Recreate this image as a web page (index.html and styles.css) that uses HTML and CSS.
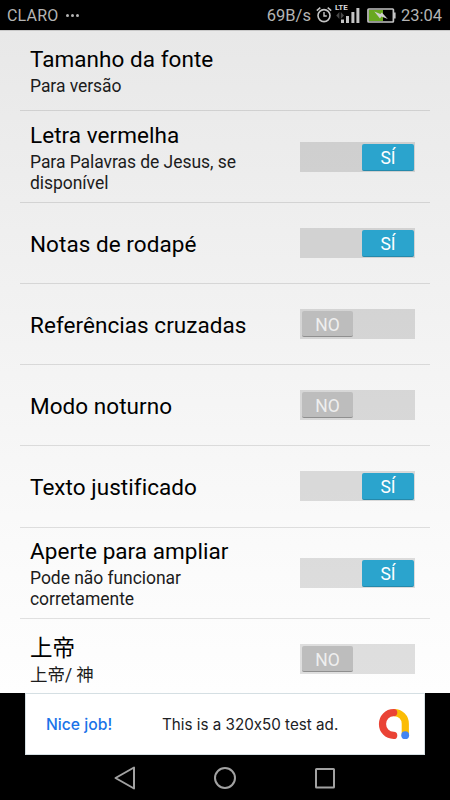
FILE: index.html
```html
<!DOCTYPE html>
<html lang="pt">
<head>
    <meta charset="UTF-8">
    <meta name="viewport" content="width=device-width, initial-scale=1.0">
    <title>Configurações</title>

    <link rel="stylesheet" href="styles.css">
</head>

<body>
    <div class="statusbar">
        <span class="carrier">CLARO</span>
        <span class="dots"><i></i><i></i><i></i></span>
        <span class="speed">69B/s</span>
        <svg class="alarm" width="16" height="18" viewBox="0 0 16 18" fill="none" stroke="#c4c4c4">
            <circle cx="8" cy="9.6" r="6" stroke-width="1.6"/>
            <path d="M8 6v4h2.8" stroke-width="1.4"/>
            <path d="M.8 4.6 4.3 1.6M15.2 4.6 11.7 1.6" stroke-width="1.5"/>
        </svg>
        <span class="signal">
            <b>LTE</b>
            <svg width="26" height="20" viewBox="0 0 26 20">
                <path d="M5.4 7v7L2.2 10.5zM6.8 7v7l3.2-3.5z" fill="#484848"/>
                <path d="M7 14.5h3V18H7zM12 11h3v7h-3zM17.4 7h3v11h-3zM22.4 3h3v15h-3z" fill="#c4c4c4"/>
            </svg>
        </span>
        <svg class="battery" width="29" height="15" viewBox="0 0 29 15">
            <rect x="2" y="2" width="14" height="11" fill="#69a820"/>
            <rect x="1" y="1" width="25.4" height="13" rx=".8" fill="none" stroke="#c4c4c4" stroke-width="1.7"/>
            <path d="M27 4.5h1.6v6H27z" fill="#c4c4c4"/>
            <path d="M7.3 3.4 13.4 6l1.4-1.6 6 6.7-6.4-2.7-1.4 2z" fill="#d0d0d0"/>
        </svg>
        <span class="clock">23:04</span>
    </div>

    <div class="settings">
        <div class="row">
            <div class="label">
                <h3>Tamanho da fonte</h3>
                <p>Para versão</p>
            </div>
        </div>
        <div class="row">
            <div class="label">
                <h3>Letra vermelha</h3>
                <p>Para Palavras de Jesus, se disponível</p>
            </div>
            <div class="switch on"><span>SÍ</span></div>
        </div>
        <div class="row">
            <div class="label"><h3>Notas de rodapé</h3></div>
            <div class="switch on"><span>SÍ</span></div>
        </div>
        <div class="row">
            <div class="label"><h3>Referências cruzadas</h3></div>
            <div class="switch"><span>NO</span></div>
        </div>
        <div class="row">
            <div class="label"><h3>Modo noturno</h3></div>
            <div class="switch"><span>NO</span></div>
        </div>
        <div class="row">
            <div class="label"><h3>Texto justificado</h3></div>
            <div class="switch on"><span>SÍ</span></div>
        </div>
        <div class="row">
            <div class="label">
                <h3>Aperte para ampliar</h3>
                <p>Pode não funcionar corretamente</p>
            </div>
            <div class="switch on"><span>SÍ</span></div>
        </div>
        <div class="row">
            <div class="label">
                <h3>上帝</h3>
                <p>上帝/ 神</p>
            </div>
            <div class="switch"><span>NO</span></div>
        </div>
    </div>

    <div class="ad">
        <span class="nice">Nice job!</span>
        <span class="adtext">This is a 320x50 test ad.</span>
        <svg width="32" height="32" viewBox="0 0 32 32" fill="none" stroke-width="7.2">
            <path d="M16 4.6c6.5 0 11.3 4.8 11.3 11.2V27" stroke="#fbbc04"/>
            <path d="M15.7 4.6C9.2 4.6 4.5 9.6 4.5 16s4.7 11.4 11.2 11.4" stroke="#ea4335" stroke-linecap="round"/>
            <circle cx="27.2" cy="27.2" r="3.9" fill="#4285f4"/>
        </svg>
    </div>

    <div class="navbar">
        <svg width="22" height="24" viewBox="0 0 22 24"><path d="M20 1.5v21L1.5 12z"/></svg>
        <svg width="22" height="24" viewBox="0 0 22 24"><circle cx="11" cy="12" r="10"/></svg>
        <svg width="22" height="24" viewBox="0 0 22 24"><rect x="2" y="3" width="18" height="18.5" rx=".5"/></svg>
    </div>
</body>

</html>
```
FILE: styles.css
```css
* {
    box-sizing: border-box;
}

body {
    margin: 0;
    width: 450px;
    height: 800px;
    overflow: hidden;
    background-color: #000;
    font-family: Roboto, "Noto Sans CJK SC", sans-serif;
    display: flex;
    flex-direction: column;
}

h3,
p {
    margin: 0;
    font-weight: normal;
}

/* status bar */
.statusbar {
    height: 30px;
    flex: none;
    display: flex;
    align-items: center;
    padding: 0 8px 0 7px;
    color: #b4b4b4;
    font-size: 16.5px;
}

.carrier {
    font-size: 16px;
    letter-spacing: .2px;
}

.dots {
    display: flex;
    gap: 2px;
    margin-left: 8px;
}

.dots i {
    width: 3px;
    height: 3px;
    border-radius: 50%;
    background-color: #b4b4b4;
}

.speed {
    margin-left: auto;
}

.alarm {
    margin-left: 5px;
}

.signal {
    position: relative;
    height: 20px;
    margin-left: 2px;
}

.signal svg {
    display: block;
}

.signal b {
    position: absolute;
    left: 1px;
    top: -2px;
    font-size: 8px;
    line-height: 10px;
    color: #d8d8d8;
}

.battery {
    margin-left: 7px;
}

.clock {
    margin-left: 5px;
}

/* settings list */
.settings {
    height: 663px;
    flex: none;
    overflow: hidden;
    padding: 0 20px;
    background: linear-gradient(#e8e8e8, #fbfbfb 82%, #fefefe);
    border-top: 1px solid #c8c8c8;
}

.row {
    height: 81.2px;
    display: flex;
    align-items: center;
    justify-content: space-between;
    padding: 0 15px 0 10px;
    border-bottom: 1px solid rgba(0, 0, 0, .11);
}

.row:first-child {
    height: 80.4px;
}

.row:nth-child(2),
.row:nth-child(7) {
    height: 91.4px;
}

.label {
    width: 240px;
    padding-top: 2px;
}

.label h3 {
    font-size: 22.5px;
    line-height: 26.5px;
    letter-spacing: .05px;
    color: #000;
}

.label p {
    margin-top: 3.5px;
    font-size: 17.5px;
    line-height: 20.5px;
    letter-spacing: -.05px;
    color: #1c1c1c;
}

/* switch */
.switch {
    width: 115px;
    height: 30px;
    padding: 2px 2px 2px;
    display: flex;
    background-color: rgba(0, 0, 0, .12);
}

.switch span {
    width: 51px;
    height: 26px;
    border-radius: 2px;
    background-color: #bdbdbd;
    border-bottom: 1px solid #8f8f8f;
    color: #efefef;
    font-size: 17.5px;
    line-height: 28px;
    text-align: center;
}

.switch.on {
    justify-content: flex-end;
    padding-right: 1px;
}

.switch.on span {
    width: 52px;
    height: 27px;
    background-color: #2ba4cd;
    border-color: #2589ab;
    color: #fff;
}

/* ad banner */
.ad {
    width: 400px;
    height: 62px;
    flex: none;
    margin: 0 auto;
    padding: 0 14px 0 20px;
    display: flex;
    align-items: center;
    background-color: #fff;
    border: 1px solid #d5dfe3;
    font-family: Inter, sans-serif;
    font-size: 15.2px;
    font-feature-settings: "calt" 0;
}

.nice {
    width: 116px;
    color: #1a73e8;
    font-size: 15.7px;
    font-weight: 500;
}

.adtext {
    margin-right: auto;
    color: #202124;
}

/* navigation */
.navbar {
    flex: 1;
    display: flex;
    align-items: center;
    justify-content: center;
    gap: 78px;
}

.navbar svg {
    fill: none;
    stroke: #a2a2a2;
    stroke-width: 2;
    stroke-linejoin: round;
}
```
